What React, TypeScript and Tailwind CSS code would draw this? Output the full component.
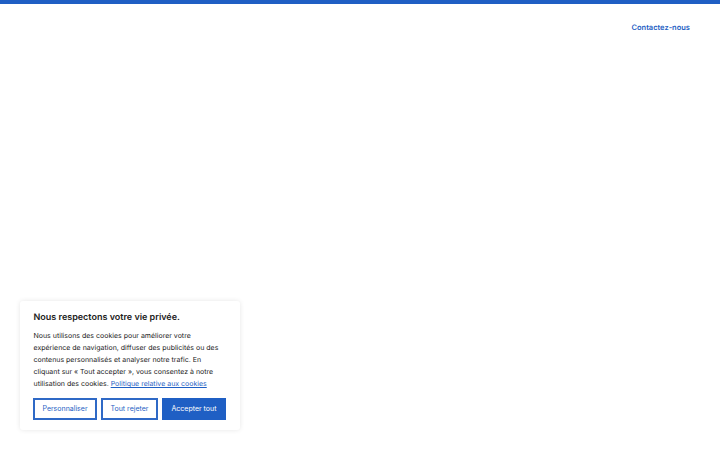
export default function App() {
  return (
    <div className="relative h-[450px] w-[720px] overflow-hidden bg-white font-['Inter',sans-serif] antialiased [text-rendering:geometricPrecision]">
      <div className="h-1 bg-[#1f5fc4]" />
      <header className="flex justify-end pr-[30px] pt-[18px]">
        <a className="text-[7.5px] leading-[12px] font-semibold text-[#1f5fc4]">Contactez-nous</a>
      </header>

      {/* Cookie banner */}
      <div className="absolute left-5 top-[301px] h-[129px] w-[220px] rounded-[3px] bg-white px-[13.5px] pt-2.5 shadow-[0_0_5px_rgba(0,0,0,0.1)]">
        <h2 className="text-[9px] leading-[14px] font-semibold text-[#212121]">Nous respectons votre vie privée.</h2>
        <p className="mt-[5px] text-[7px] leading-[12px] text-[#212121]">
          Nous utilisons des cookies pour améliorer votre expérience de navigation, diffuser des publicités ou des contenus personnalisés et analyser notre trafic. En cliquant sur « Tout accepter », vous consentez à notre utilisation des cookies.{" "}
          <a className="text-[#1f5fc4] underline">Politique relative aux cookies</a>
        </p>
        <div className="mt-2 -ml-[0.5px] flex gap-1">
          <button className="h-[22px] w-16 border-2 border-[#2f69c6] text-[7px] text-[#1f5fc4]">Personnaliser</button>
          <button className="h-[22px] w-[57px] border-2 border-[#2f69c6] text-[7px] text-[#1f5fc4]">Tout rejeter</button>
          <button className="h-[22px] w-16 bg-[#1f5fc4] text-[7px] text-white">Accepter tout</button>
        </div>
      </div>
    </div>
  );
}
